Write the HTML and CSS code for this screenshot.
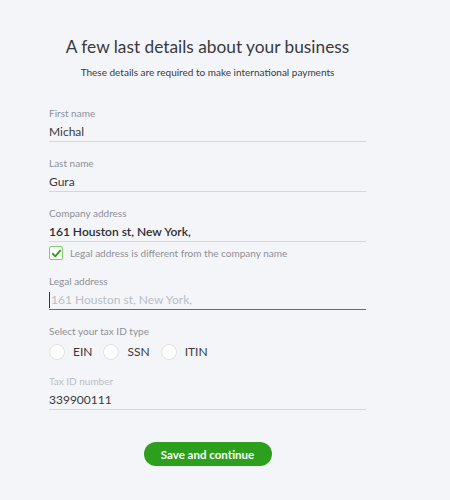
FILE: index.html
```html
<!DOCTYPE html>
<html>
<head>
<meta charset="utf-8">
<link rel="stylesheet" href="styles.css">
</head>
<body>
<div class="page">
  <h1 class="title">A few last details about your business</h1>
  <p class="subtitle">These details are required to make international payments</p>

  <div class="field field-first">
    <div class="label">First name</div>
    <div class="value">Michal</div>
  </div>
  <div class="field">
    <div class="label">Last name</div>
    <div class="value">Gura</div>
  </div>
  <div class="field">
    <div class="label">Company address</div>
    <div class="value value-strong">161 Houston st, New York,</div>
  </div>
  <div class="check-row">
    <span class="checkbox">
      <svg width="11" height="11" viewBox="0 0 11 11"><path d="M1.8 5.8 L4.3 8.3 L9.2 2.6" fill="none" stroke="#2ca01c" stroke-width="1.9" stroke-linecap="round" stroke-linejoin="round"/></svg>
    </span>
    <span class="check-text">Legal address is different from the company name</span>
  </div>
  <div class="field">
    <div class="label">Legal address</div>
    <div class="value value-focus"><span class="caret"></span><span class="placeholder">161 Houston st, New York,</span></div>
  </div>
  <div class="radio-field">
    <div class="label">Select your tax ID type</div>
    <div class="radios">
      <span class="radio"><span class="circle"></span>EIN</span>
      <span class="radio"><span class="circle"></span>SSN</span>
      <span class="radio"><span class="circle"></span>ITIN</span>
    </div>
  </div>
  <div class="field">
    <div class="label label-light">Tax ID number</div>
    <div class="value">339900111</div>
  </div>
  <div class="actions">
    <button class="btn">Save and continue</button>
  </div>
</div>
</body>
</html>
```
FILE: styles.css
```css
html, body {
  margin: 0;
  padding: 0;
  background: #f4f5f9;
}
body {
  font-family: Lato, "Open Sans", sans-serif;
  color: #393a3d;
}
.page {
  width: 317px;
  margin-left: 49px;
  padding-top: 36px;
  display: flex;
  flex-direction: column;
}
.title {
  margin: 0;
  font-size: 17.3px;
  font-weight: 400;
  text-align: center;
  color: #393a3d;
  line-height: 22px;
}
.subtitle {
  margin: 7px 0 0;
  font-size: 10px;
  text-align: center;
  color: #393a3d;
  line-height: 14px;
}
.field {
  margin-top: 14px;
  display: flex;
  flex-direction: column;
}
.field-first { margin-top: 27px; }
.label {
  font-size: 10px;
  line-height: 14px;
  color: #8d9096;
}
.label-light { color: #babec5; }
.value {
  margin-top: 4px;
  font-size: 12px;
  line-height: 16px;
  height: 17px;
  color: #393a3d;
  border-bottom: 1px solid #d4d7dc;
  display: flex;
  align-items: flex-start;
}
.value-strong { font-weight: 600; color: #2d2e31; }
.value-focus { border-bottom-color: #6b6c72; }
.caret {
  width: 1px;
  height: 16px;
  background: #393a3d;
  margin-right: 1px;
}
.placeholder { color: #babec5; }
.check-row {
  margin-top: 4px;
  display: flex;
  align-items: center;
  gap: 7px;
}
.checkbox {
  width: 12px;
  height: 12px;
  border: 1px solid #7fcc71;
  border-radius: 2px;
  background: #fff;
  display: flex;
  align-items: center;
  justify-content: center;
}
.check-text {
  font-size: 10px;
  color: #8d9096;
  line-height: 14px;
}
.radio-field {
  margin-top: 14px;
  display: flex;
  flex-direction: column;
}
.radios {
  margin-top: 6px;
  display: flex;
  gap: 11px;
}
.radio {
  display: flex;
  align-items: center;
  font-size: 12px;
  color: #393a3d;
  gap: 8px;
  line-height: 16px;
}
.circle {
  width: 14px;
  height: 14px;
  border: 1px solid #dfe1e5;
  border-radius: 50%;
  background: #fff;
}
.actions {
  margin-top: 32px;
  display: flex;
  justify-content: center;
}
.btn {
  width: 128px;
  height: 24px;
  border: none;
  border-radius: 12px;
  background: #2ca01c;
  color: #fff;
  font-family: Lato, sans-serif;
  font-size: 11.5px;
  font-weight: 700;
  padding: 0;
}
```
